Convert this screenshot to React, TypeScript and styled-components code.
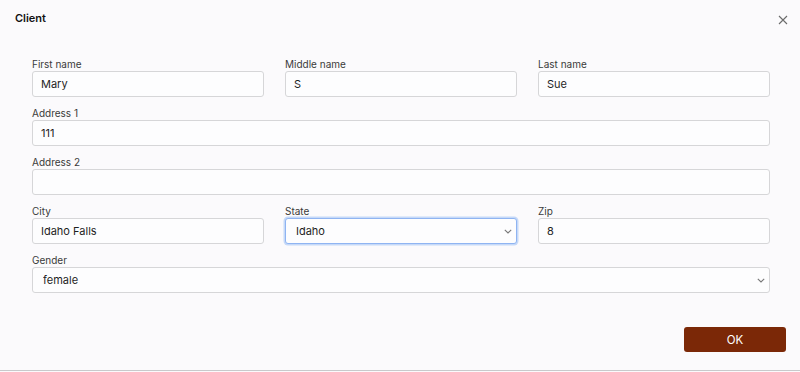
import React, { useState } from "react";
import styled, { createGlobalStyle } from "styled-components";

const GlobalStyle = createGlobalStyle`
  html, body {
    margin: 0;
    padding: 0;
    background: #fbfafc;
  }
  body {
    font-family: Inter, "Noto Sans", "Liberation Sans", sans-serif;
    color: #222;
  }
`;

type FieldProps = {
  label: string;
  value: string;
  span?: number;
};

const states = ["Idaho", "Utah", "Montana", "Wyoming"];
const genders = ["female", "male", "other"];

const TextField = ({ label, value, span = 1 }: FieldProps) => {
  const [text, setText] = useState(value);
  return (
    <Field $span={span}>
      <Label>{label}</Label>
      <Input value={text} onChange={(e) => setText(e.target.value)} />
    </Field>
  );
};

const SelectField = ({
  label,
  value,
  options,
  span = 1,
  focused,
}: FieldProps & { options: string[]; focused?: boolean }) => {
  const [selected, setSelected] = useState(value);
  return (
    <Field $span={span}>
      <Label>{label}</Label>
      <SelectWrap>
        <Select
          $focused={focused}
          value={selected}
          onChange={(e) => setSelected(e.target.value)}
        >
          {options.map((o) => (
            <option key={o}>{o}</option>
          ))}
        </Select>
        <Chevron width="8" height="5" viewBox="0 0 8 5">
          <path d="M0.8 0.8 L4 4 L7.2 0.8" fill="none" stroke="#777" strokeWidth="1.1" />
        </Chevron>
      </SelectWrap>
    </Field>
  );
};

export default function App() {
  return (
    <>
      <GlobalStyle />
      <Dialog>
        <Header>
          <Title>Client</Title>
          <CloseButton aria-label="Close">
            <svg width="10" height="10" viewBox="0 0 10 10">
              <path d="M1 1 L9 9 M9 1 L1 9" stroke="#6b6b6b" strokeWidth="1.1" />
            </svg>
          </CloseButton>
        </Header>
        <Form>
          <TextField label="First name" value="Mary" />
          <TextField label="Middle name" value="S" />
          <TextField label="Last name" value="Sue" />
          <TextField label="Address 1" value="111" span={3} />
          <TextField label="Address 2" value="" span={3} />
          <TextField label="City" value="Idaho Falls" />
          <SelectField label="State" value="Idaho" options={states} focused />
          <TextField label="Zip" value="8" />
          <SelectField label="Gender" value="female" options={genders} span={3} />
        </Form>
        <Footer>
          <OkButton>OK</OkButton>
        </Footer>
      </Dialog>
    </>
  );
}

const Dialog = styled.div`
  height: 370px;
  display: flex;
  flex-direction: column;
  border-bottom: 1px solid #c9c9cb;
  background: #fbfafc;
`;

const Header = styled.div`
  display: flex;
  align-items: center;
  justify-content: space-between;
  padding: 9px 12px 0 15px;
  height: 17px;
`;

const Title = styled.h1`
  margin: 0;
  font-size: 11px;
  font-weight: 600;
  color: #111;
`;

const CloseButton = styled.button`
  border: 0;
  background: none;
  padding: 0;
  margin-top: 5px;
  width: 10px;
  height: 10px;
  display: flex;
  cursor: pointer;
`;

const Form = styled.div`
  display: grid;
  grid-template-columns: repeat(3, 1fr);
  column-gap: 21px;
  row-gap: 9px;
  padding: 0 30px 0 32px;
  margin-top: 31px;
`;

const Field = styled.div<{ $span: number }>`
  grid-column: span ${(p) => p.$span};
  display: flex;
  flex-direction: column;
`;

const Label = styled.label`
  font-size: 10px;
  line-height: 13px;
  color: #3a3a3a;
  margin-bottom: 1px;
  padding-top: 1px;
  height: 12px;
`;

const Input = styled.input`
  box-sizing: border-box;
  height: 26px;
  width: 100%;
  border: 1px solid #d6d6d8;
  border-radius: 3px;
  background: #fdfdfe;
  padding: 0 8px;
  font-family: inherit;
  font-size: 11px;
  color: #1f1f1f;
  outline: none;
`;

const SelectWrap = styled.div`
  position: relative;
`;

const Select = styled.select<{ $focused?: boolean }>`
  box-sizing: border-box;
  appearance: none;
  height: 26px;
  width: 100%;
  border: 1px solid ${(p) => (p.$focused ? "#8fb4f2" : "#d6d6d8")};
  box-shadow: ${(p) => (p.$focused ? "0 0 0 1.5px #c6d9f8" : "none")};
  border-radius: 3px;
  background: #fdfdfe;
  padding: 0 10px;
  font-family: inherit;
  font-size: 11px;
  color: #1f1f1f;
  outline: none;
`;

const Chevron = styled.svg`
  position: absolute;
  right: 5px;
  top: 11px;
  pointer-events: none;
`;

const Footer = styled.div`
  margin-top: auto;
  display: flex;
  justify-content: flex-end;
  padding: 0 14px 18px 0;
`;

const OkButton = styled.button`
  width: 102px;
  height: 25px;
  border: 0;
  border-radius: 3px;
  background: #7b2807;
  color: #fff;
  font-family: inherit;
  font-size: 11.5px;
  cursor: pointer;
`;
